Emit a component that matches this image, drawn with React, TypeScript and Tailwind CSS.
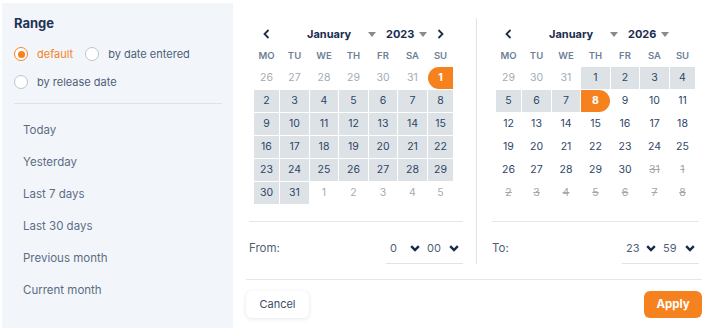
import React from "react";

type Day = { n: number; kind: "out" | "range" | "start" | "end" | "plain" | "off" };

const COLS = "grid grid-cols-[25px_29px_28px_29px_28px_29px_25px] gap-px";

const jan2023: Day[] = [
  ...[26, 27, 28, 29, 30, 31].map((n) => ({ n, kind: "out" as const })),
  { n: 1, kind: "start" },
  ...Array.from({ length: 30 }, (_, i) => ({ n: i + 2, kind: "range" as const })),
  ...[1, 2, 3, 4, 5].map((n) => ({ n, kind: "out" as const })),
];

const jan2026: Day[] = [
  ...[29, 30, 31].map((n) => ({ n, kind: "out" as const })),
  ...Array.from({ length: 7 }, (_, i) => ({ n: i + 1, kind: "range" as const })),
  { n: 8, kind: "end" },
  ...Array.from({ length: 22 }, (_, i) => ({ n: i + 9, kind: "plain" as const })),
  { n: 31, kind: "off" },
  ...[1, 2, 3, 4, 5, 6, 7, 8].map((n) => ({ n, kind: "off" as const })),
];

const Caret = () => (
  <svg width="8" height="5" viewBox="0 0 8 5">
    <path d="M0 0 L8 0 L4 5 Z" fill="#8f8888" />
  </svg>
);

const Chevron = ({ dir }: { dir: "left" | "right" }) => (
  <svg width="7" height="10" viewBox="0 0 7 10">
    <path
      d={dir === "left" ? "M5.5 1 L1.5 5 L5.5 9" : "M1.5 1 L5.5 5 L1.5 9"}
      fill="none"
      stroke="#1f2d45"
      strokeWidth="1.8"
    />
  </svg>
);

const Down = () => (
  <svg width="10" height="7" viewBox="0 0 10 7">
    <path d="M1.2 1.2 L5 5 L8.8 1.2" fill="none" stroke="#15294a" strokeWidth="2.4" />
  </svg>
);

const dayClass = (k: Day["kind"]) => {
  switch (k) {
    case "range":
      return "bg-[#dde2e6] text-[#2d4567]";
    case "start":
      return "bg-[#f5821f] text-white font-bold rounded-l-[11px]";
    case "end":
      return "bg-[#f5821f] text-white font-bold rounded-r-[11px]";
    case "plain":
      return "text-[#2d4567]";
    case "off":
      return "text-[#a9a4a0] line-through";
    default:
      return "text-[#a3abb5]";
  }
};

const Calendar = ({
  year,
  days,
  next,
  padL,
  label,
  time,
}: {
  year: string;
  days: Day[];
  next: boolean;
  padL: string;
  label: string;
  time: [string, string];
}) => (
  <div className="flex flex-col pt-[4px]">
    <div className={`${padL} flex items-center h-[24px]`}>
      <button className="w-[24px] h-[24px] flex items-center justify-center">
        <Chevron dir="left" />
      </button>
      <div className="ml-[29px] w-[69px] flex items-center justify-between">
        <span className="text-[11px] font-bold text-[#1b2d4f]">January</span>
        <Caret />
      </div>
      <div className="ml-[10px] w-[41px] flex items-center justify-between">
        <span className="text-[11px] font-bold text-[#1b2d4f]">{year}</span>
        <Caret />
      </div>
      {next && (
        <button className="ml-[1px] w-[24px] h-[24px] flex items-center justify-center">
          <Chevron dir="right" />
        </button>
      )}
    </div>
    <div className={`${padL} ${COLS} h-[21px] items-center`}>
      {["MO", "TU", "WE", "TH", "FR", "SA", "SU"].map((d) => (
        <span key={d} className="text-center text-[9.5px] font-semibold text-[#6e7f96]">
          {d}
        </span>
      ))}
    </div>
    <div className={`${padL} ${COLS} auto-rows-[22px]`}>
      {days.map((d, i) => (
        <span
          key={i}
          className={`flex items-center justify-center text-[10.5px] ${dayClass(d.kind)}`}
        >
          {d.n}
        </span>
      ))}
    </div>
    <div className="mt-[17px] h-px bg-[#e2e7ed]" />
    <div className="pt-[11px] flex items-center justify-between">
      <span className="text-[11.5px] text-[#4f5f78]">{label}</span>
      <div className="w-[77px] h-[31px] border-b border-[#dfe4ea] flex items-center">
        <div className="w-[38px] pl-[4px] pr-[4px] flex items-center justify-between">
          <span className="text-[11px] text-[#4f5f78]">{time[0]}</span>
          <Down />
        </div>
        <div className="flex-1 pl-[3px] pr-[4px] flex items-center justify-between">
          <span className="text-[11px] text-[#4f5f78]">{time[1]}</span>
          <Down />
        </div>
      </div>
    </div>
  </div>
);

const Radio = ({ on, text }: { on?: boolean; text: string }) => (
  <label className="flex items-center gap-[9px]">
    <span
      className={`w-[14px] h-[14px] rounded-full border flex items-center justify-center bg-white ${
        on ? "border-[#f5821f]" : "border-[#bcc5cf]"
      }`}
    >
      {on && <span className="w-[7px] h-[7px] rounded-full bg-[#f5821f]" />}
    </span>
    <span className={`text-[11px] ${on ? "text-[#f5821f]" : "text-[#4d5e78]"}`}>{text}</span>
  </label>
);

const presets = ["Today", "Yesterday", "Last 7 days", "Last 30 days", "Previous month", "Current month"];

export default function App() {
  return (
    <div
      className="w-[706px] h-[328px] bg-white flex overflow-hidden"
      style={{ fontFamily: "Inter, 'Noto Sans', sans-serif" }}
    >
      <aside className="w-[231px] ml-[2px] mt-[3px] bg-[#f2f6fa] pl-3 pr-[11px] pt-[12px]">
        <h2 className="text-[13px] font-bold text-[#1e3354] leading-[16px]">Range</h2>
        <div className="mt-[15px] flex items-center gap-[12px]">
          <Radio on text="default" />
          <Radio text="by date entered" />
        </div>
        <div className="mt-[11px]">
          <Radio text="by release date" />
        </div>
        <div className="mt-[13px] h-px bg-[#dce2e8]" />
        <ul className="mt-[11px] pl-[9px] flex flex-col">
          {presets.map((p) => (
            <li key={p} className="h-[32px] flex items-center text-[11.5px] text-[#5c6c85]">
              {p}
            </li>
          ))}
        </ul>
      </aside>
      <main className="flex-1 flex flex-col">
        <div className="flex pt-[18px] pl-4">
          <div className="w-[214px]">
            <Calendar year="2023" days={jan2023} next padL="pl-[5px]" label="From:" time={["0", "00"]} />
          </div>
          <div className="ml-[13px] mr-[15px] w-px bg-[#dde3ea]" />
          <div className="w-[207px]">
            <Calendar year="2026" days={jan2026} next={false} padL="pl-[4px]" label="To:" time={["23", "59"]} />
          </div>
        </div>
        <div className="mt-[15px] ml-[13px] mr-[4px] h-px bg-[#e2e7ed]" />
        <div className="mt-[11px] ml-[13px] mr-[4px] flex justify-between">
          <button className="w-[63px] h-[27px] rounded-md bg-white shadow-[0_1px_4px_rgba(30,50,80,0.12)] text-[11px] text-[#3d4d66]">
            Cancel
          </button>
          <button className="w-[58px] h-[27px] rounded-md bg-[#f5821f] text-[11.5px] font-bold text-white">
            Apply
          </button>
        </div>
      </main>
    </div>
  );
}
